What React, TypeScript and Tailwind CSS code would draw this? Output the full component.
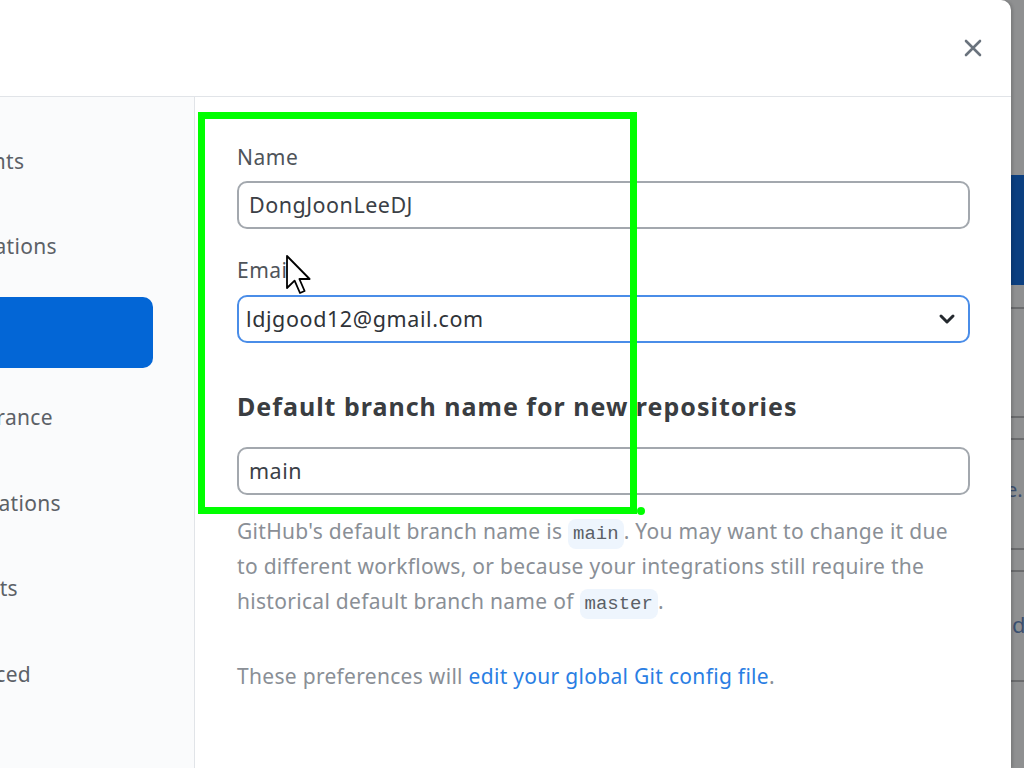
import React from 'react';

const tabs = [
  { label: 'Accounts', active: false },
  { label: 'Integrations', active: false },
  { label: 'Git', active: true },
  { label: 'Appearance', active: false },
  { label: 'Notifications', active: false },
  { label: 'Prompts', active: false },
  { label: 'Advanced', active: false },
];

const Code: React.FC<{ children: React.ReactNode }> = ({ children }) => (
  <span className="inline-block rounded-[8px] bg-[#eef5fd] px-[5px] leading-[30px] tracking-normal font-['Liberation_Mono',monospace] text-[19px] text-[#5a5f66]">
    {children}
  </span>
);

export default function App() {
  return (
    <div className="relative flex h-[768px] w-[1024px] overflow-hidden bg-[#8f9091] font-['Noto_Sans',sans-serif]">
      {/* settings dialog */}
      <div className="relative z-10 flex h-full w-[1011px] shrink-0 flex-col rounded-tr-[10px] bg-white shadow-[2px_0_3px_rgba(0,0,0,0.15)]">
        <div className="flex h-[97px] shrink-0 items-center justify-end border-b border-[#e1e4e8] pr-[28px]">
          <svg width="20" height="20" viewBox="0 0 20 20" className="text-[#6a737d]">
            <path d="M3 3 L17 17 M17 3 L3 17" stroke="currentColor" strokeWidth="2.6" strokeLinecap="round" />
          </svg>
        </div>

        <div className="flex flex-1">
          <div className="w-[195px] shrink-0 border-r border-[#e1e4e8] bg-[#fafbfc] pr-[41px] pt-[29px]">
            <div className="flex flex-col gap-[14.5px]">
              {tabs.map((t) => (
                <div
                  key={t.label}
                  className={
                    'flex h-[71px] items-center rounded-r-[10px] text-[21px] tracking-[0.3px] ' +
                    (t.active ? 'bg-[#0366d6] text-white' : 'text-[#5c6167]')
                  }
                >
                  <span className="ml-[-68px] whitespace-nowrap">{t.label}</span>
                </div>
              ))}
            </div>
          </div>

          <div className="flex-1 pl-[42px] pr-[41px] pt-[45px]">
            <div className="text-[21px] leading-[30px] tracking-[0.5px] text-[#4f545a]">Name</div>
            <div className="mt-[9px] flex h-[48px] items-center rounded-[10px] border-2 border-[#a3a8ae] px-[10px] text-[21.5px] tracking-[0.5px] text-[#3b4046]">
              DongJoonLeeDJ
            </div>

            <div className="mt-[26px] text-[21px] leading-[30px] tracking-[0.5px] text-[#4f545a]">Email</div>
            <div className="mt-[10px] flex h-[48px] items-center justify-between rounded-[10px] border-2 border-[#4a8de8] pl-[7px] pr-[12px] text-[21.5px] tracking-[0.6px] text-[#2f3338]">
              <span>ldjgood12@gmail.com</span>
              <svg width="18" height="12" viewBox="0 0 18 12">
                <path d="M3 3 L9 9 L15 3" fill="none" stroke="#24292e" strokeWidth="3" strokeLinecap="round" strokeLinejoin="round" />
              </svg>
            </div>

            <div className="mt-[47px] text-[25px] font-bold leading-[32px] tracking-[1px] text-[#3a3d41]">
              Default branch name for new repositories
            </div>
            <div className="mt-[25px] flex h-[48px] items-center rounded-[10px] border-2 border-[#a3a8ae] px-[10px] text-[21.5px] tracking-[0.5px] text-[#3b4046]">
              main
            </div>

            <p className="mt-[19px] text-[21px] leading-[34.5px] tracking-[0.3px] text-[#8a8f96]">
              GitHub's default branch name is <Code>main</Code>. You may want to change it due
              <br />
              to different workflows, or because your integrations still require the
              <br />
              historical default branch name of <Code>master</Code>.
            </p>

            <p className="mt-[40px] text-[21px] leading-[34px] tracking-[0.3px] text-[#8a8f96]">
              These preferences will <span className="text-[#2a7ee3]">edit your global Git config file</span>.
            </p>
          </div>
        </div>
      </div>

      {/* dimmed app behind the dialog */}
      <div className="flex flex-1 flex-col">
        <div className="h-[175px]" />
        <div className="h-[110px] bg-[#0b3f80]" />
        <div className="h-[22px]" />
        <div className="h-[2px] bg-[#6b6c6e]" />
        <div className="h-[107px]" />
        <div className="h-[2px] bg-[#6b6c6e]" />
        <div className="h-[20px]" />
        <div className="h-[2px] bg-[#6b6c6e]" />
        <div className="relative h-[108px]">
          <span className="absolute left-[-5px] top-[40px] text-[20px] leading-none text-[#3c5070]">e.</span>
        </div>
        <div className="h-[2px] bg-[#6b6c6e]" />
        <div className="h-[20px]" />
        <div className="h-[2px] bg-[#6b6c6e]" />
        <div className="relative h-[108px]">
          <span className="absolute left-[1px] top-[41px] text-[22px] leading-none text-[#3c5070]">d</span>
        </div>
        <div className="h-[2px] bg-[#6b6c6e]" />
      </div>

      {/* annotation box */}
      <div className="pointer-events-none absolute z-20 left-[198px] top-[112px] h-[402px] w-[439px] border-[7px] border-[#00ff00]" />
      <div className="pointer-events-none absolute z-20 left-[637px] top-[507px] h-[8px] w-[8px] rounded-full bg-[#00ff00]" />

      {/* mouse pointer */}
      <svg className="pointer-events-none absolute z-20 left-[286px] top-[255px]" width="26" height="40" viewBox="0 0 13 20">
        <path d="M0.5 0.5 L0.5 16.5 L4.3 12.8 L7 19 L9.3 18 L6.7 12 L11.8 12 Z" fill="#ffffff" stroke="#000000" strokeWidth="0.9" strokeLinejoin="round" />
      </svg>
    </div>
  );
}
